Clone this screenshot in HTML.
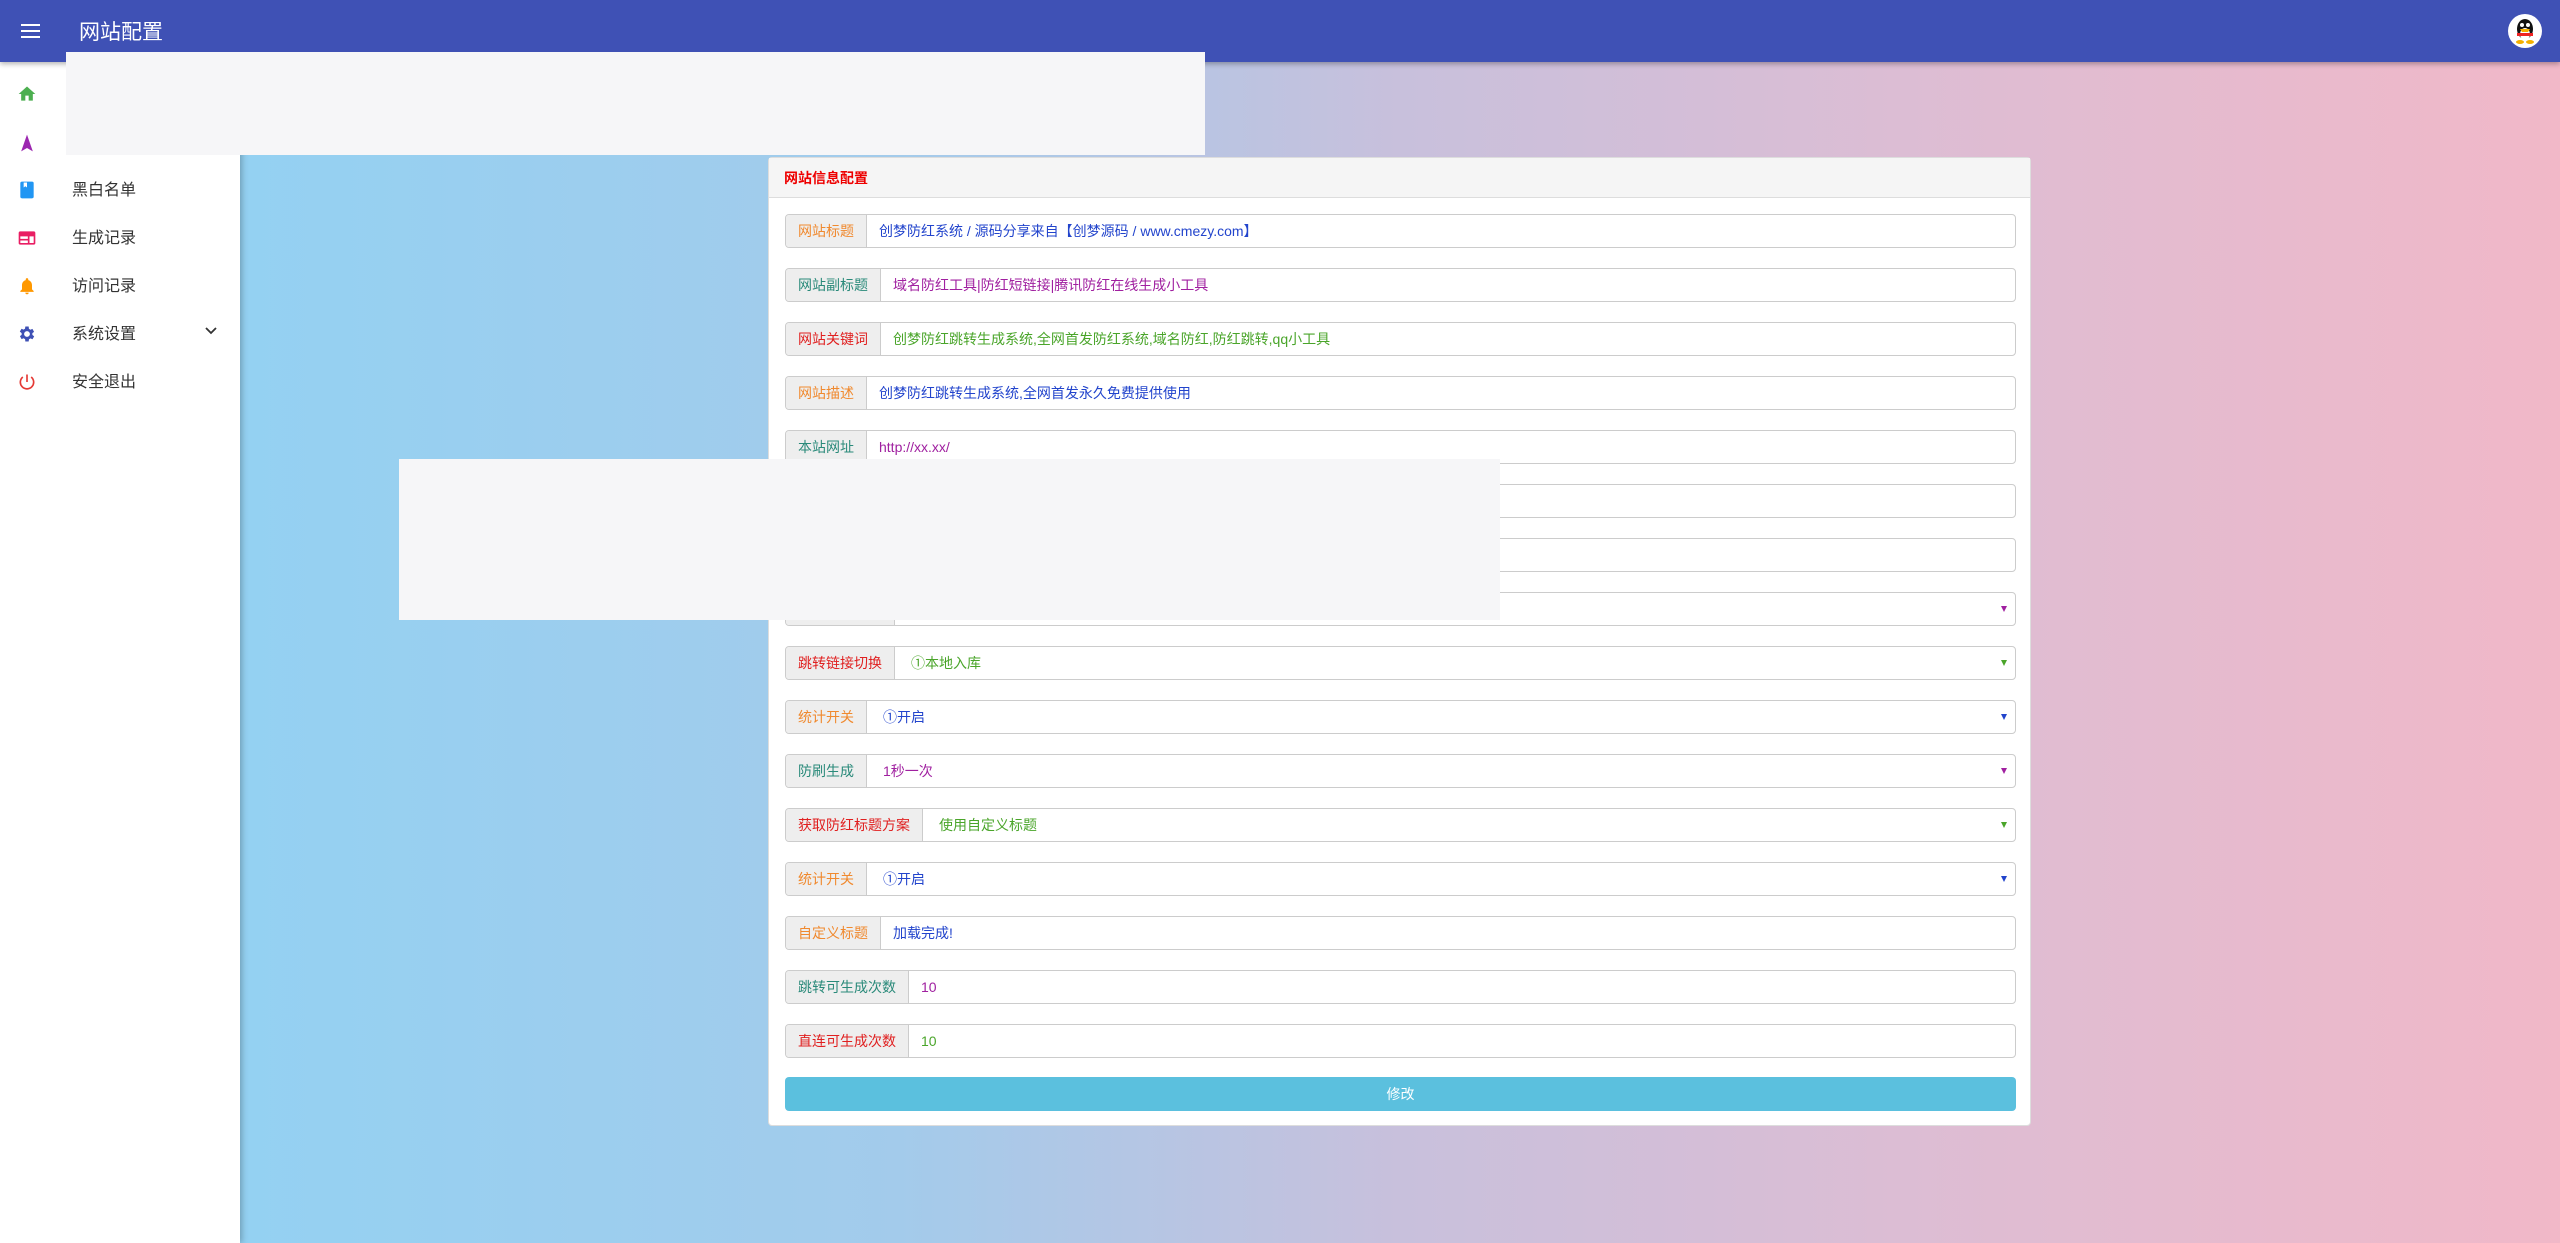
<!DOCTYPE html>
<html><head><meta charset="utf-8"><style>
*{box-sizing:border-box;margin:0;padding:0}
body{width:2560px;height:1243px;overflow:hidden;position:relative;font-family:"Liberation Sans","Noto Sans CJK SC",sans-serif;background:linear-gradient(to right,#8dd0f4 0px,#94d1f2 240px,#a3cbeb 900px,#c8c0dc 1400px,#dcbdd4 1900px,#f1b8c8 2560px)}
.top{position:absolute;left:0;top:0;width:2560px;height:62px;background:#3f51b5;box-shadow:0 2px 5px rgba(0,0,0,.3);z-index:5}
.top .t{position:absolute;left:79px;top:16px;color:#fff;font-size:21px}
.ham{position:absolute;left:21px;top:24px;width:19px}
.ham i{display:block;height:2px;background:#fff;margin-bottom:4px}
.side{position:absolute;left:0;top:62px;width:240px;height:1181px;background:#fff;box-shadow:2px 0 6px rgba(0,0,0,.25);z-index:4}
.it{position:absolute;left:0;width:240px;height:40px;font-size:16px;color:#333}
.it span{position:absolute;left:72px;top:6px}
.it svg{position:absolute;left:17px;top:10px}
.ov{position:absolute;background:#f6f6f8;z-index:6}
.panel{position:absolute;left:768px;top:157px;width:1263px;height:969px;background:#fff;border:1px solid #ddd;border-radius:4px}
.ph{height:40px;background:#f5f5f5;border-bottom:1px solid #ddd;color:#e00;font-size:14px;font-weight:bold;padding:10px 15px}
.row{position:absolute;left:16px;width:1231px;height:34px;border:1px solid #ccc;border-radius:4px;display:flex;font-size:14px;overflow:hidden}
.lb{background:#eee;border-right:1px solid #ccc;padding:0 12px;line-height:32px;white-space:nowrap}
.v{flex:1;line-height:32px;padding-left:12px;position:relative}
.s .v{padding-left:16px}
.ar{position:absolute;right:8px;top:13px;width:0;height:0;border-left:3px solid transparent;border-right:3px solid transparent;border-top:6px solid}
.btn{position:absolute;left:16px;top:919px;width:1231px;height:34px;background:#5bc0de;border-radius:4px;color:#fff;text-align:center;line-height:34px;font-size:14px}
.o{color:#f0892e}.te{color:#2a8a7a}.r{color:#e02020}.g{color:#4aa52a}.b{color:#2244cc}.p{color:#a020a0}
</style></head><body>
<div class="top"><div class="ham"><i></i><i></i><i></i></div><div class="t">网站配置</div>
<svg style="position:absolute;left:2508px;top:14px" width="34" height="34" viewBox="0 0 34 34"><circle cx="17" cy="17" r="17" fill="#fff"/><ellipse cx="17" cy="15" rx="8" ry="10" fill="#111"/><ellipse cx="17" cy="20" rx="5" ry="6" fill="#fff"/><circle cx="14" cy="11" r="2" fill="#fff"/><circle cx="20" cy="11" r="2" fill="#fff"/><path d="M12 15h10l-2 3h-6z" fill="#f5b000"/><path d="M9 19h16v3H9z" fill="#e22"/><ellipse cx="12" cy="28" rx="4" ry="2" fill="#f5b000"/><ellipse cx="22" cy="28" rx="4" ry="2" fill="#f5b000"/></svg></div>
<div class="side">
<div class="it" style="top:12px"><svg width="20" height="20" viewBox="0 0 24 24"><path d="M10 20v-6h4v6h5v-8h3L12 3 2 12h3v8z" fill="#4caf50"/></svg></div>
<div class="it" style="top:60px"><svg width="20" height="22" viewBox="0 0 24 24"><path d="M12 2l7 20-7-4-7 4z" fill="#9c27b0"/></svg></div>
<div class="it" style="top:108px"><svg width="20" height="20" viewBox="0 0 24 24"><rect x="4" y="2" width="16" height="20" rx="2" fill="#2196f3"/><path d="M8 3v6l2-1.5 2 1.5V3z" fill="#fff"/></svg><span>黑白名单</span></div>
<div class="it" style="top:156px"><svg width="20" height="20" viewBox="0 0 24 24"><rect x="2" y="4" width="20" height="16" rx="2" fill="#e91e63"/><path d="M4 10h9v3H4zm0 5h9v3H4zm11-5h5v8h-5z" fill="#fff"/></svg><span>生成记录</span></div>
<div class="it" style="top:204px"><svg width="20" height="20" viewBox="0 0 24 24"><path d="M12 22a2 2 0 002-2h-4a2 2 0 002 2zm6-6v-5c0-3-2-5.5-4.5-6V4a1.5 1.5 0 00-3 0v1C8 5.5 6 8 6 11v5l-2 2v1h16v-1z" fill="#ff9800"/></svg><span>访问记录</span></div>
<div class="it" style="top:252px"><svg width="20" height="20" viewBox="0 0 24 24"><path d="M19.4 13a7.5 7.5 0 000-2l2.1-1.6-2-3.5-2.5 1a7.3 7.3 0 00-1.7-1L15 3h-4l-.4 2.7a7.3 7.3 0 00-1.7 1l-2.5-1-2 3.5L6.6 11a7.5 7.5 0 000 2l-2.1 1.6 2 3.5 2.5-1a7.3 7.3 0 001.7 1L11 21h4l.4-2.7a7.3 7.3 0 001.7-1l2.5 1 2-3.5zM13 15.5a3.5 3.5 0 110-7 3.5 3.5 0 010 7z" fill="#3f51b5" transform="translate(-1 0)"/></svg><span>系统设置</span><svg style="left:204px;top:10px" width="14" height="14" viewBox="0 0 14 14"><path d="M2 4l5 5 5-5" stroke="#333" stroke-width="1.8" fill="none"/></svg></div>
<div class="it" style="top:300px"><svg width="20" height="20" viewBox="0 0 24 24"><path d="M12 3v9M7 6a8 8 0 1010 0" stroke="#e53935" stroke-width="2" fill="none"/></svg><span>安全退出</span></div>
</div>
<div class="ov" style="left:66px;top:52px;width:1139px;height:103px"></div>
<div class="ov" style="left:399px;top:459px;width:1101px;height:161px"></div>
<div class="panel"><div class="ph">网站信息配置</div>
<div class="row" style="top:56px"><div class="lb o">网站标题</div><div class="v b">创梦防红系统 / 源码分享来自【创梦源码 / www.cmezy.com】</div></div>
<div class="row" style="top:110px"><div class="lb te">网站副标题</div><div class="v p">域名防红工具|防红短链接|腾讯防红在线生成小工具</div></div>
<div class="row" style="top:164px"><div class="lb r">网站关键词</div><div class="v g">创梦防红跳转生成系统,全网首发防红系统,域名防红,防红跳转,qq小工具</div></div>
<div class="row" style="top:218px"><div class="lb o">网站描述</div><div class="v b">创梦防红跳转生成系统,全网首发永久免费提供使用</div></div>
<div class="row" style="top:272px"><div class="lb te">本站网址</div><div class="v p">http://xx.xx/</div></div>
<div class="row" style="top:326px"><div class="lb r">站长QQ号码</div><div class="v g"></div></div>
<div class="row" style="top:380px"><div class="lb o">网站公告</div><div class="v b"></div></div>
<div class="row s" style="top:434px"><div class="lb te">生成方式切换</div><div class="v p"><i class="ar"></i></div></div>
<div class="row s" style="top:488px"><div class="lb r">跳转链接切换</div><div class="v g">①本地入库<i class="ar"></i></div></div>
<div class="row s" style="top:542px"><div class="lb o">统计开关</div><div class="v b">①开启<i class="ar"></i></div></div>
<div class="row s" style="top:596px"><div class="lb te">防刷生成</div><div class="v p">1秒一次<i class="ar"></i></div></div>
<div class="row s" style="top:650px"><div class="lb r">获取防红标题方案</div><div class="v g">使用自定义标题<i class="ar"></i></div></div>
<div class="row s" style="top:704px"><div class="lb o">统计开关</div><div class="v b">①开启<i class="ar"></i></div></div>
<div class="row" style="top:758px"><div class="lb o">自定义标题</div><div class="v b">加载完成!</div></div>
<div class="row" style="top:812px"><div class="lb te">跳转可生成次数</div><div class="v p">10</div></div>
<div class="row" style="top:866px"><div class="lb r">直连可生成次数</div><div class="v g">10</div></div>
<div class="btn">修改</div>
</div>
</body></html>
